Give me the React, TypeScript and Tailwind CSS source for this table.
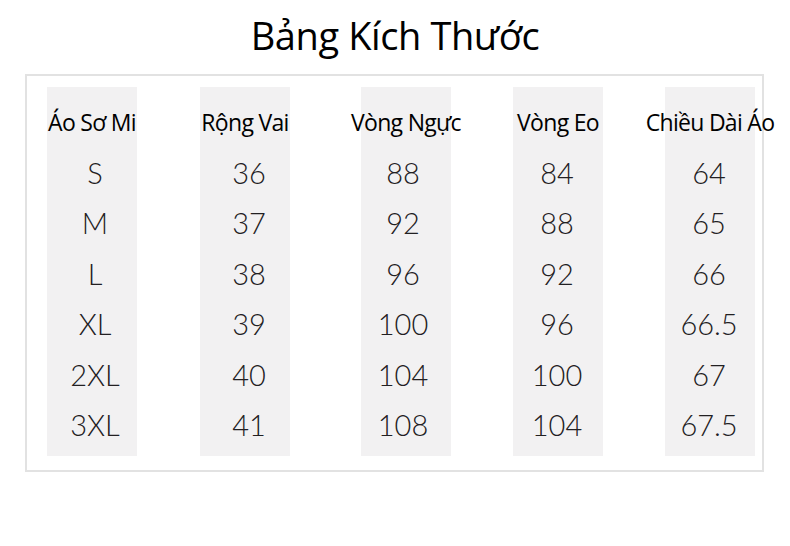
import * as React from 'react';

const headers = ['Áo Sơ Mi', 'Rộng Vai', 'Vòng Ngực', 'Vòng Eo', 'Chiều Dài Áo'];

const columns: string[][] = [
  ['S', 'M', 'L', 'XL', '2XL', '3XL'],
  ['36', '37', '38', '39', '40', '41'],
  ['88', '92', '96', '100', '104', '108'],
  ['84', '88', '92', '96', '100', '104'],
  ['64', '65', '66', '66.5', '67', '67.5'],
];

// left margin of each grey column, measured from the box's inner edge
const offsets = ['ml-[20px]', 'ml-[63px]', 'ml-[71px]', 'ml-[62px]', 'ml-[62px]'];
// the numbers sit a little off-centre in the original
const nudges = ['pl-[6px]', 'pl-[8px]', 'pr-[6px]', 'pr-[2px]', 'pr-[2px]'];

export default function App() {
  return (
    <div className="w-[790px] h-[546px] bg-white overflow-hidden">
      <h1
        className="text-center text-[38px] leading-[44px] pt-[13px] text-black tracking-[-0.4px]"
        style={{ fontFamily: '"Open Sans", "Noto Sans", sans-serif' }}
      >
        Bảng Kích Thước
      </h1>

      <div className="ml-[25px] mt-[17px] w-[739px] h-[398px] border-2 border-[#e2e2e2] pt-[11px] flex">
        {columns.map((col, i) => (
          <div key={i} className={`${offsets[i]} w-[90px] h-[369px] bg-[#f2f1f2] pt-[10px] flex flex-col items-center`}>
            <div
              className="h-[50px] flex items-center justify-center whitespace-nowrap text-[23px] text-black tracking-[-0.7px]"
              style={{ fontFamily: '"Open Sans", "Noto Sans", sans-serif' }}
            >
              {headers[i]}
            </div>
            {col.map((v) => (
              <div
                key={v}
                className={`${nudges[i]} h-[50.5px] flex items-center justify-center text-[29px] font-light text-[#222022]`}
                style={{ fontFamily: 'Lato, "Open Sans", sans-serif' }}
              >
                {v}
              </div>
            ))}
          </div>
        ))}
      </div>
    </div>
  );
}
